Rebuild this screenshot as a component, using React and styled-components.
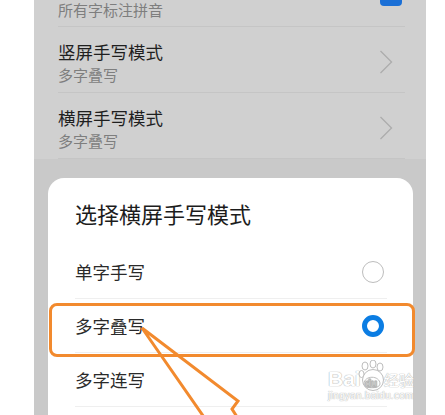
import styled, { createGlobalStyle } from "styled-components";

const GlobalStyle = createGlobalStyle`
  body {
    margin: 0;
    background: #ffffff;
    font-family: "Noto Sans CJK SC", "Noto Sans", sans-serif;
  }
`;

const Page = styled.div`
  position: relative;
  width: 445px;
  height: 415px;
  overflow: hidden;
  display: flex;
  padding: 0 19px 0 34px;
  box-sizing: border-box;
  background: #ffffff;
`;

const Panel = styled.div`
  flex: 1;
  display: flex;
  flex-direction: column;
  background: #d0d0d0;
`;

const List = styled.div`
  display: flex;
  flex-direction: column;
  padding: 0 21px 0 24px;
`;

const TopRow = styled.div`
  height: 27px;
  display: flex;
  justify-content: space-between;
  border-bottom: 1px solid #c5c5c5;
  box-sizing: border-box;
  overflow: hidden;
`;

const Checkbox = styled.div`
  width: 22px;
  height: 22px;
  margin: -16px 3px 0 0;
  border-radius: 4px;
  background: #1a6fd6;
`;

const Row = styled.div`
  height: 66px;
  display: flex;
  align-items: center;
  justify-content: space-between;
  border-bottom: 1px solid #c5c5c5;
  box-sizing: border-box;
`;

const TextBlock = styled.div`
  display: flex;
  flex-direction: column;
  align-self: flex-start;
  padding-top: 14px;
`;

const Title = styled.div`
  font-size: 17.5px;
  line-height: 22px;
  color: #1f1f1f;
`;

const Sub = styled.div`
  font-size: 15px;
  line-height: 20px;
  margin-top: ${(p) => (p.$flush ? "0" : "2px")};
  color: #7e7e7e;
`;

const Chevron = styled.svg`
  width: 14px;
  height: 24px;
  margin: 4px 12px 0 0;
`;

const Lower = styled.div`
  flex: 1;
  display: flex;
  flex-direction: column;
  padding: 19px 13px 0 14px;
  background: #c9c9c9;
`;

const Sheet = styled.div`
  flex: 1;
  background: #ffffff;
  border-radius: 16px 16px 0 0;
  padding: 22px 26px 0 27px;
`;

const SheetTitle = styled.div`
  font-size: 22px;
  line-height: 26px;
  color: #1c1c1c;
  margin-bottom: 19px;
`;

const Option = styled.div`
  position: relative;
  height: 54px;
  display: flex;
  align-items: center;
  justify-content: space-between;
  border-bottom: 1px solid #efefef;
  box-sizing: border-box;
  font-size: 17.5px;
  color: #2a2a2a;
`;

const Radio = styled.span`
  width: 22px;
  height: 22px;
  margin-right: 3px;
  border-radius: 50%;
  box-sizing: border-box;
  border: ${(p) => (p.$checked ? "5.5px solid #0b7de3" : "1.5px solid #bdbdbd")};
`;

const Highlight = styled.div`
  position: absolute;
  top: 4px;
  bottom: -5px;
  left: -26px;
  right: -28px;
  border: 3px solid #f28a2e;
  border-radius: 8px;
  pointer-events: none;
`;

const Arrow = styled.svg`
  position: absolute;
  left: 0;
  top: 0;
  width: 445px;
  height: 415px;
  pointer-events: none;
`;

const Watermark = styled.div`
  position: absolute;
  left: 328px;
  top: 360px;
  display: flex;
  flex-direction: column;
  color: #ffffff;
  font-family: "Liberation Sans", Arial, sans-serif;
  text-shadow: 0 0 1px #b0b0b0, 0 0 1px #b0b0b0;
  pointer-events: none;
`;

const Brand = styled.div`
  display: flex;
  align-items: flex-end;
  height: 30px;
  font-size: 21px;
  font-weight: bold;
  line-height: 22px;
`;

const Paw = styled.svg`
  width: 28px;
  height: 30px;
  margin: 0 -2px 0 -3px;
`;

const Jing = styled.span`
  font-family: "Noto Sans CJK SC", sans-serif;
  font-size: 15px;
  line-height: 20px;
  font-weight: normal;
`;

const Domain = styled.div`
  font-size: 10px;
  line-height: 12px;
  letter-spacing: 0.3px;
`;

const options = [
  { label: "单字手写" },
  { label: "多字叠写", checked: true },
  { label: "多字连写" },
];

const ChevronIcon = () => (
  <Chevron viewBox="0 0 14 24">
    <polyline points="1.5,1 12.5,12 1.5,23" fill="none" stroke="#acacac" strokeWidth="1.3" />
  </Chevron>
);

const App = () => {
  return (
    <>
      <GlobalStyle />
      <Page>
        <Panel>
          <List>
            <TopRow>
              <Sub $flush>所有字标注拼音</Sub>
              <Checkbox />
            </TopRow>
            <Row>
              <TextBlock>
                <Title>竖屏手写模式</Title>
                <Sub>多字叠写</Sub>
              </TextBlock>
              <ChevronIcon />
            </Row>
            <Row>
              <TextBlock>
                <Title>横屏手写模式</Title>
                <Sub>多字叠写</Sub>
              </TextBlock>
              <ChevronIcon />
            </Row>
          </List>
          <Lower>
            <Sheet>
              <SheetTitle>选择横屏手写模式</SheetTitle>
              {options.map((o) => (
                <Option key={o.label}>
                  {o.label}
                  <Radio $checked={o.checked} />
                  {o.checked && <Highlight />}
                </Option>
              ))}
            </Sheet>
          </Lower>
        </Panel>
        <Arrow viewBox="0 0 445 415">
          <polyline
            points="206,420 142,328 238,401 232,409 239,420"
            fill="none"
            stroke="#f28a2e"
            strokeWidth="3"
            strokeLinejoin="miter"
          />
        </Arrow>
        <Watermark>
          <Brand>
            Bai
            <Paw viewBox="0 0 28 30">
              <g fill="none" stroke="#bdbdbd" strokeWidth="1">
                <ellipse cx="7" cy="6" rx="3" ry="4" fill="#fff" />
                <ellipse cx="15" cy="4" rx="3" ry="4" fill="#fff" />
                <ellipse cx="22" cy="7" rx="3" ry="4" fill="#fff" />
                <ellipse cx="3.5" cy="14" rx="2.5" ry="3.5" fill="#fff" />
                <path d="M6 24 C6 15 22 15 22 24 C22 29 6 29 6 24 Z" fill="#fff" />
              </g>
              <text x="7" y="27" fontSize="10" fontWeight="bold" fill="#ffffff" stroke="#b5b5b5" strokeWidth="0.5">du</text>
            </Paw>
            <Jing>经验</Jing>
          </Brand>
          <Domain>jingyan.baidu.com</Domain>
        </Watermark>
      </Page>
    </>
  );
};

export default App;
